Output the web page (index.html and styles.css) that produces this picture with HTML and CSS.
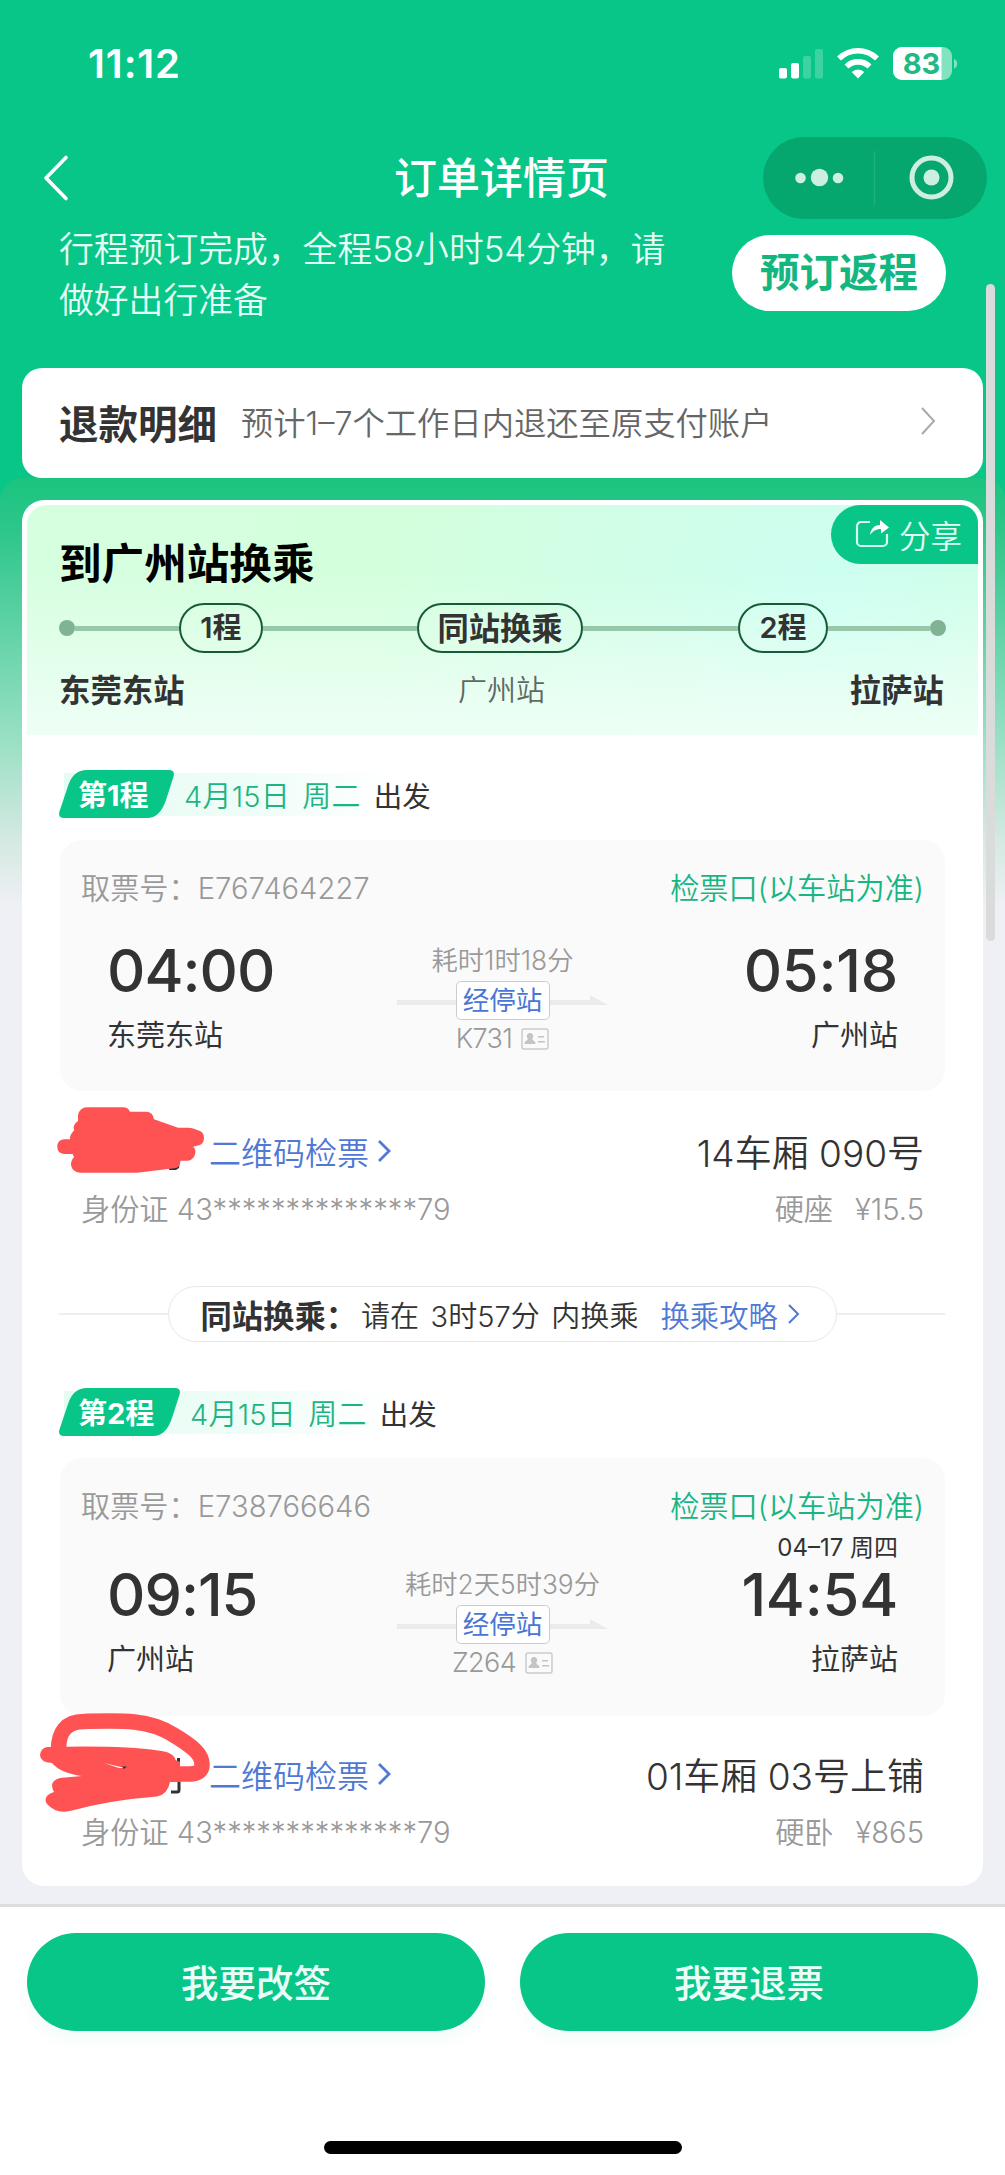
FILE: index.html
```html
<!DOCTYPE html>
<html lang="zh-CN">
<head>
<meta charset="utf-8">
<title>订单详情页</title>
<link rel="stylesheet" href="styles.css">
</head>
<body>
<div class="screen">
  <div class="status">
    <span class="clock">11:12</span>
    <svg class="status-icons" width="180" height="34" viewBox="0 0 180 34">
      <g fill="#fff">
        <rect x="0" y="21" width="8" height="10.500" rx="2"/>
        <rect x="12" y="16" width="8" height="15.500" rx="2"/>
        <rect x="24" y="9" width="8" height="22.500" rx="2" opacity=".22"/>
        <rect x="36" y="2" width="8" height="29.500" rx="2" opacity=".22"/>
      </g>
      <g fill="none" stroke="#fff" stroke-width="5.600">
        <path d="M60 11.500a27 27 0 0 1 38 0"/>
        <path d="M67.500 19.500a16.500 16.500 0 0 1 23 0"/>
      </g>
      <path d="M79 31.500l-6.300-6.500a9 9 0 0 1 12.600 0z" fill="#fff"/>
      <rect x="114" y="0" width="59" height="33" rx="9" fill="#82e3c0"/>
      <path d="M123 0h39.500v33H123a9 9 0 0 1-9-9V9a9 9 0 0 1 9-9z" fill="#fff"/>
      <path d="M175 12a4.500 5 0 0 1 0 9.500z" fill="#82e3c0"/>
      <text class="battery-text" x="142.500" y="27">83</text>
    </svg>
  </div>

  <div class="nav">
    <svg class="back" width="28" height="48" viewBox="0 0 28 48"><path d="M24 3.500L4 24l20 20.500" fill="none" stroke="#fff" stroke-width="3.600" stroke-linecap="round" stroke-linejoin="round"/></svg>
    <h1 class="nav-title">订单详情页</h1>
    <svg class="capsule" width="224" height="82" viewBox="0 0 224 82">
      <rect width="224" height="82" rx="41" fill="#06a76f"/>
      <g fill="#cdefe0"><circle cx="37.500" cy="41" r="5.300"/><circle cx="56.500" cy="40.500" r="8.700"/><circle cx="75" cy="41" r="5.300"/><circle cx="168.500" cy="40.500" r="8"/></g>
      <path d="M111.500 14v54" stroke="#1fb17c" stroke-width="1.500"/>
      <circle cx="168.500" cy="40.500" r="19.500" fill="none" stroke="#cdefe0" stroke-width="5"/>
    </svg>
  </div>

  <div class="notice">
    <p class="notice-text">行程预订完成，全程58小时54分钟，请做好出行准备</p>
    <div class="return-btn">预订返程</div>
  </div>

  <div class="refund">
    <b class="refund-title">退款明细</b>
    <span class="refund-sub">预计1–7个工作日内退还至原支付账户</span>
    <svg class="refund-arrow" width="18" height="30" viewBox="0 0 18 30"><path d="M3 2l12 13L3 28" fill="none" stroke="#aaa" stroke-width="2"/></svg>
  </div>

  <div class="panel">
    <div class="card">
      <div class="summary">
        <div class="share">
          <svg width="34" height="30" viewBox="0 0 34 30"><path d="M15 3H6a4 4 0 0 0-4 4v16a4 4 0 0 0 4 4h22a4 4 0 0 0 4-4v-8" fill="none" stroke="#d9fbec" stroke-width="2.200"/><path d="M15 16c1-7 5-10 10-10V1l9 7.500-8 6V10c-5 0-8 2-11 6z" fill="#fff"/></svg>
          <span>分享</span>
        </div>
        <h2 class="summary-title">到广州站换乘</h2>
        <div class="track">
          <i class="dot"></i><i class="seg seg-a"></i><span class="pill">1程</span><i class="seg seg-b"></i><span class="pill pill-mid">同站换乘</span><i class="seg seg-c"></i><span class="pill pill-end">2程</span><i class="seg seg-d"></i><i class="dot"></i>
        </div>
        <div class="stops"><b>东莞东站</b><span>广州站</span><b class="to">拉萨站</b></div>
      </div>

      <div class="leg-head">
        <div class="leg-tag"><svg width="115" height="48" viewBox="0 0 115 48"><path d="M24 0H110q6 0 4.700 6L107 30Q101 48 88 48H5q-6 0-4.700-6L9 16Q14 0 28 0z" fill="#07c688"/></svg><b>第1程</b></div>
        <span class="leg-date">4月15日 周二</span><span class="leg-go">出发</span>
      </div>
      <div class="box">
        <div class="ticket"><span>取票号：<span class="num">E767464227</span></span><span class="gate">检票口(以车站为准)</span></div>
        <div class="route">
          <div class="end"><div class="time">04:00</div><div class="station">东莞东站</div></div>
          <div class="mid">
            <div class="dur">耗时1时18分</div>
            <div class="arrow"><svg width="211" height="12" viewBox="0 0 211 12"><path d="M0 5H193V0L211 10H0z" fill="#ebebeb"/></svg><span class="via">经停站</span></div>
            <div class="train">K731<svg width="28" height="22" viewBox="0 0 28 22"><rect x="1" y="1" width="26" height="20" rx="2" fill="none" stroke="#ccc" stroke-width="1.500"/><path d="M9 5a3 3 0 0 1 2.500 5v2q3 1 3 4h-11q0-3 3-4v-2A3 3 0 0 1 9 5zM17 8h6v1.500h-6zM17 13h7v1.500h-7z" fill="#c4c4c4"/></svg></div>
          </div>
          <div class="end end-right"><div class="time">05:18</div><div class="station">广州站</div></div>
        </div>
      </div>
      <div class="person">
        <div class="line"><div class="qr">二维码检票<svg width="14" height="24" viewBox="0 0 14 24"><path d="M2 2l10 10L2 22" fill="none" stroke="#5079d6" stroke-width="2.800"/></svg></div><div class="seat">14车厢 090号</div></div>
        <div class="line sub"><span>身份证 43<span class="stars">**************</span>79</span><span><span class="kind">硬座</span>¥15.5</span></div>
        <svg class="scribble" width="160" height="76" viewBox="0 0 160 76"><path d="M122 56h9l-1 9-3 2h-7z" fill="#333"/><path d="M29 12Q31 4.300 38 4.300H74Q79 4.300 81 8.700H97Q104 9 105 16.300L129 24.700H139Q145 25 148 27Q155 28 155 35Q155 42 148 42.700L144 43.700Q147 46 146.300 50.300Q145 57 139 57.700H131.500Q131 64 127 65L88 69.700H31Q23 69 22 62Q22 57 25 54L23.700 51H15Q8.300 50 8.300 43.700Q8.300 37 15 36.300H21Q20 33 25.300 27Q23 22 29 18z" fill="#fe5253"/></svg>
      </div>

      <div class="transfer">
        <i class="rule"></i>
        <div class="transfer-pill"><b>同站换乘：</b><span class="wait">请在 3时57分 内换乘</span><span class="guide">换乘攻略<svg width="13" height="22" viewBox="0 0 13 22"><path d="M2 2l9 9-9 9" fill="none" stroke="#5079d6" stroke-width="2"/></svg></span></div>
        <i class="rule"></i>
      </div>

      <div class="leg-head leg-head-2">
        <div class="leg-tag"><svg width="121" height="48" viewBox="0 0 121 48"><path d="M24 0H116q6 0 4.700 6L113 30Q107 48 94 48H5q-6 0-4.700-6L9 16Q14 0 28 0z" fill="#07c688"/></svg><b>第2程</b></div>
        <span class="leg-date">4月15日 周二</span><span class="leg-go">出发</span>
      </div>
      <div class="box box-2">
        <div class="ticket"><span>取票号：<span class="num">E738766646</span></span><span class="gate">检票口(以车站为准)</span></div>
        <div class="route">
          <div class="end"><div class="time">09:15</div><div class="station">广州站</div></div>
          <div class="mid">
            <div class="dur">耗时2天5时39分</div>
            <div class="arrow"><svg width="211" height="12" viewBox="0 0 211 12"><path d="M0 5H193V0L211 10H0z" fill="#ebebeb"/></svg><span class="via">经停站</span></div>
            <div class="train">Z264<svg width="28" height="22" viewBox="0 0 28 22"><rect x="1" y="1" width="26" height="20" rx="2" fill="none" stroke="#ccc" stroke-width="1.500"/><path d="M9 5a3 3 0 0 1 2.500 5v2q3 1 3 4h-11q0-3 3-4v-2A3 3 0 0 1 9 5zM17 8h6v1.500h-6zM17 13h7v1.500h-7z" fill="#c4c4c4"/></svg></div>
          </div>
          <div class="end end-right"><div class="arrive-date">04–17 周四</div><div class="time">14:54</div><div class="station">拉萨站</div></div>
        </div>
      </div>
      <div class="person person-2">
        <div class="line"><div class="qr">二维码检票<svg width="14" height="24" viewBox="0 0 14 24"><path d="M2 2l10 10L2 22" fill="none" stroke="#5079d6" stroke-width="2.800"/></svg></div><div class="seat">01车厢 03号上铺</div></div>
        <div class="line sub"><span>身份证 43<span class="stars">**************</span>79</span><span><span class="kind">硬卧</span>¥865</span></div>
        <svg class="scribble scribble-2" width="190" height="110" viewBox="0 0 190 110"><path d="M148.500 55v9M149 76v11q0 2-2 2h-6" fill="none" stroke="#333" stroke-width="3"/><path d="M29 54C26 27 38 18.500 54 18.500C90 17.500 118 16 142 31C164 44 172.500 52 172 62Q172 70.500 160 71H140" fill="none" stroke="#fe5253" stroke-width="15.500"/><path d="M17 44Q92 42 128 47.500Q144 49 145.500 57L150 59V79H140Q138 91 127 93.500Q80 97 40 108Q26 111 17 101Q12 93 24 89Q18 78 30 75L52 73Q30 70 22 60Q10 59 10 52Q11 45 17 44z" fill="#fe5253"/><path d="M74 60l21 5-6 0z" fill="#fff"/><path d="M92 63.500l5 0-3 2.500z" fill="#333"/></svg>
      </div>
    </div>
  </div>

  <div class="footer">
    <div class="actions"><div class="action">我要改签</div><div class="action">我要退票</div></div>
    <div class="home-bar"></div>
  </div>
  <div class="scrollbar"></div>
</div>
</body>
</html>
```
FILE: styles.css
```css
* { box-sizing: border-box; margin: 0; padding: 0; }
body { width: 1005px; font-family: Inter, "Noto Sans CJK SC", sans-serif; color: #333; }
svg { display: block; flex: none; }
i { font-style: normal; }
.screen { position: relative; width: 1005px; height: 2175px; background: #07c688; display: flex; flex-direction: column; overflow: hidden; white-space: nowrap; }

.status { height: 132px; padding: 0 46px 4px 88px; display: flex; align-items: center; justify-content: space-between; color: #fff; }
.clock { font-size: 40px; font-weight: 600; line-height: 48px; letter-spacing: 0.9px; }
.battery-text { font: 700 29px Inter, sans-serif; fill: #22b985; text-anchor: middle; }

.nav { height: 92px; padding: 0 18px 0 42px; display: grid; grid-template-columns: 352px 237px 1fr; align-items: center; color: #fff; }
.nav-title { font-size: 43px; font-weight: 500; line-height: 60px; }
.capsule { justify-self: end; }

.notice { height: 144px; padding: 0 59px; display: flex; justify-content: space-between; color: #e6fff5; }
.notice-text { width: 620px; font-size: 34.800px; line-height: 51px; white-space: normal; font-weight: 350; }
.return-btn { width: 214px; height: 76px; margin-top: 11px; border-radius: 38px; background: #fff; color: #12b67e; font-size: 39.500px; font-weight: 600; line-height: 77px; text-align: center; }

.refund { height: 110px; margin: 0 22px; padding: 0 46px 4px 37px; border-radius: 20px; background: #fff; display: flex; align-items: center; }
.refund-title { font-size: 39.500px; }
.refund-sub { margin-left: 24px; font-size: 32.300px; color: #666; font-weight: 350; }
.refund-arrow { margin-left: auto; }

.panel { height: 1426px; padding: 22px 22px 0; border-radius: 22px 22px 0 0; background: linear-gradient(#1bc47f 0, #2cc68a 50px, #9be0c5 265px, #d3e9e1 360px, #eff0f5 430px); }
.card { height: 1386px; border-radius: 22px; background: #fff; padding: 5px 5px 0; }

.summary { position: relative; height: 230px; padding: 34px 32px 0; border-radius: 20px 20px 0 0; background: linear-gradient(to bottom, rgba(238,255,245,0) 30%, #eefff6 100%), radial-gradient(circle at 84% 48%, #ccfff2 0, #d0fee9 22%, #d4ffdd 55%, #d6ffdf 100%); }
.share { position: absolute; top: 0; right: 0; width: 147px; height: 59px; padding: 0 0 2px 24px; border-radius: 30px 18px 0 30px; background: #07c688; color: #e3fff4; display: flex; align-items: center; gap: 10px; font-size: 31.500px; font-weight: 350; }
.summary-title { font-size: 42.600px; font-weight: 700; line-height: 50px; color: #000; }
.track { display: flex; align-items: center; height: 50px; margin-top: 14px; width: 887px; }
.dot { width: 16px; height: 16px; border-radius: 8px; background: #80b294; }
.seg { height: 5px; background: #97c8aa; }
.seg-a { width: 104px; }
.seg-b { width: 154px; }
.seg-c { width: 155px; }
.seg-d { flex: 1; }
.pill { width: 84px; height: 50px; border: 2.500px solid #165b38; border-radius: 25px; text-align: center; font-size: 29px; font-weight: 600; line-height: 46px; }
.pill-mid { width: 166px; font-size: 31.300px; font-weight: 600; line-height: 48px; }
.pill-end { width: 90px; }
.stops { display: grid; grid-template-columns: 1fr auto 1fr; width: 885px; margin-top: 16px; font-size: 31.400px; line-height: 44px; }
.stops span { font-size: 29px; color: #5f6963; font-weight: 350; }
.stops .to { text-align: right; }

.leg-head { height: 48px; margin: 35px 32px 0; display: flex; align-items: center; font-size: 29px; background: linear-gradient(90deg, #e4fcf2, #f0fdf8 200px, #fff 330px) 5px 3px / 400px 43px no-repeat; }
.leg-head-2 { margin-top: 46px; }
.leg-tag { display: grid; align-items: center; color: #fff; }
.leg-tag > * { grid-area: 1 / 1; }
.leg-tag b { padding: 3px 0 0 19px; font-size: 29px; line-height: 48px; }
.leg-date { margin-left: 10px; font-size: 29px; color: #1cb582; font-weight: 350; word-spacing: 4px; letter-spacing: 0.2px; }
.leg-go { margin-left: 13px; font-size: 28.500px; }

.box { height: 251px; margin: 22px 33px 0; padding: 28px 21px 0; border-radius: 22px; background: #fafafa; }
.box-2 { height: 258px; }
.ticket { height: 40px; line-height: 41px; display: flex; justify-content: space-between; font-size: 29.200px; color: #999; font-weight: 350; }
.gate { color: #17b581; font-weight: 350; }
.route { height: 148px; padding: 0 26px; display: grid; grid-template-columns: 1fr auto 1fr; align-items: end; }
.box-2 .route { height: 154px; }
.time { font-size: 59.500px; font-weight: 500; line-height: 60px; letter-spacing: -1px; }
.station { margin-top: 15px; font-size: 29px; line-height: 41px; }
.end-right { text-align: right; }
.end-right .time { letter-spacing: -0.2px; }
.arrive-date { font-size: 24px; line-height: 30px; margin-bottom: 1px; }
.mid { width: 211px; height: 115px; display: flex; flex-direction: column; align-items: center; color: #999; font-weight: 350; }
.dur { font-size: 26.300px; line-height: 40px; }
.arrow { display: grid; place-items: center; height: 38px; }
.arrow > * { grid-area: 1 / 1; }
.via { width: 94px; height: 39px; border: 1.500px solid #ccc; border-radius: 5px; background: #fff; text-align: center; color: #4976d4; font-size: 26.500px; line-height: 37px; font-weight: 400; }
.train { display: flex; align-items: center; gap: 9px; font-size: 27px; line-height: 40px; letter-spacing: -0.6px; }

.person { position: relative; margin: 0 54px; padding-top: 36px; }
.line { height: 48px; display: flex; align-items: center; justify-content: space-between; }
.qr { margin-left: 128px; display: flex; align-items: center; gap: 8px; color: #5079d6; font-size: 32px; font-weight: 350; }
.seat { font-size: 37px; font-weight: 350; }
.sub { height: 40px; margin-top: 12px; font-size: 29.200px; color: #999; font-weight: 350; }
.kind { margin-right: 22px; }
.scribble { position: absolute; left: -32px; top: 12px; }
.person-2 { padding-top: 34px; }
.scribble-2 { left: -51px; top: -13px; }

.transfer { margin: 59px 33px 0 32px; display: flex; align-items: center; }
.rule { flex: 1; height: 1.500px; background: #eee; }
.transfer-pill { width: 669px; height: 56px; border: 1.500px solid #e8e8e8; border-radius: 28px; padding-left: 32px; display: flex; align-items: center; font-size: 31.300px; }
.wait { margin-left: 4px; font-size: 29px; letter-spacing: 0.1px; word-spacing: 3px; font-weight: 350; }
.guide { margin-left: 22px; display: flex; align-items: center; gap: 9px; font-size: 29.300px; color: #5079d6; font-weight: 350; }

.footer { height: 271px; border-top: 3px solid #dcdddf; background: #fff; display: flex; flex-direction: column; align-items: center; justify-content: space-between; padding: 26px 27px 21px; }
.actions { width: 951px; display: flex; justify-content: space-between; }
.action { width: 458px; height: 98px; border-radius: 49px; background: #07c688; box-shadow: 0 8px 18px rgba(7,198,136,.06); color: #e9fff7; font-size: 37.500px; font-weight: 500; line-height: 101px; text-align: center; }
.home-bar { width: 358px; height: 13px; border-radius: 7px; background: #000; }
.scrollbar { position: absolute; left: 986px; top: 284px; width: 9px; height: 657px; border-radius: 5px; background: #d9dcdb; }
```
